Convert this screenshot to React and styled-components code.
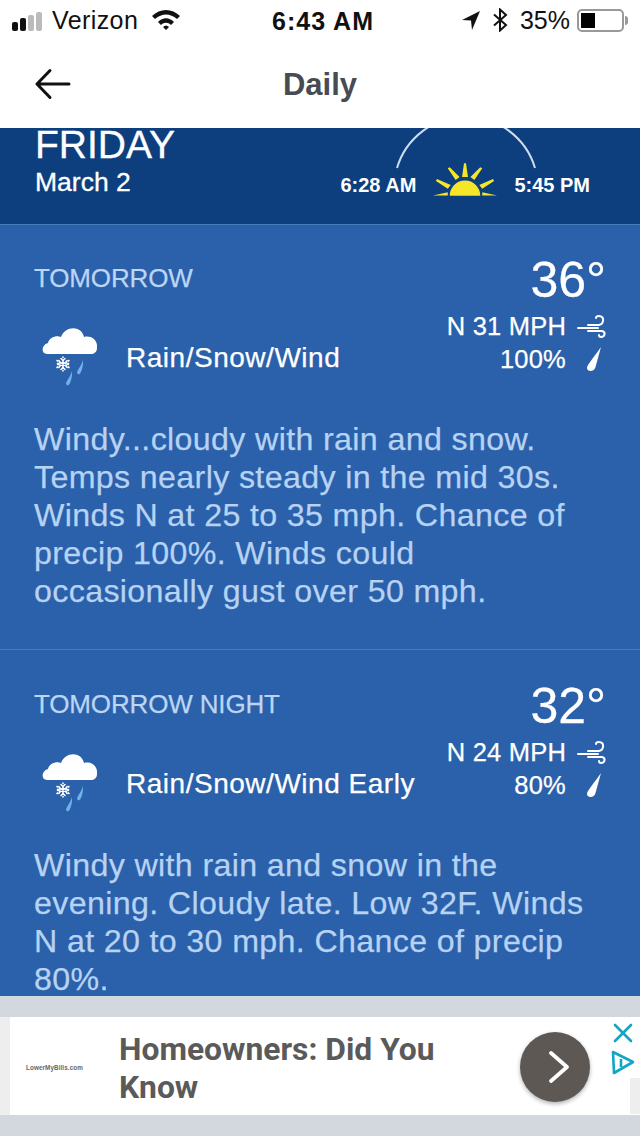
import React from "react";
import styled, { createGlobalStyle } from "styled-components";

const Global = createGlobalStyle`
  html, body { margin: 0; padding: 0; background: #d3d8df; }
  body { font-family: "Liberation Sans", Arial, sans-serif; }
`;
const Page = styled.div`
  width: 640px; height: 1136px; overflow: hidden; display: flex; flex-direction: column; background: #d3d8df;
`;
const StatusBar = styled.div`
  height: 40px; flex: none; background: #fff; display: flex; align-items: center; justify-content: space-between;
  padding: 0 16px 0 12px; color: #111; font-size: 25px; position: relative;
`;
const StatusSide = styled.div`display: flex; align-items: center; gap: ${p => p.$gap || 8}px;`;
const Carrier = styled.span`letter-spacing: .4px; margin-left: 4px;`;
const WifiIcon = styled.svg`margin-left: 7px;`;
const LocationIcon = styled.svg`margin-right: 1px;`;
const Percent = styled.span`margin: 0 -3px 0 2px;`;
const Clock = styled.div`
  position: absolute; left: 0; right: 0; top: 7px; text-align: center; font-weight: 700; font-size: 25px; line-height: 28px;
  letter-spacing: 1px; padding-left: 6px;
`;
const Bars = styled.div`display: flex; align-items: flex-end; gap: 2px; height: 20px; margin-top: 1px;`;
const Bar = styled.span`
  width: 6px; height: ${p => p.$h}px; border-radius: 2px; background: ${p => p.$on ? "#111" : "#bbb"};
`;
const Battery = styled.div`
  width: 47px; height: 23px; box-sizing: border-box; border: 2px solid #999; border-radius: 5px; padding: 2px;
  display: flex; position: relative;
  &::after { content: ""; position: absolute; right: -6px; top: 5px; width: 3px; height: 9px; background: #999; border-radius: 0 3px 3px 0; }
`;
const BatteryFill = styled.span`width: 14px; background: #000;`;
const NavBar = styled.div`
  height: 88px; flex: none; background: #fff; display: flex; align-items: center; justify-content: center; position: relative;
`;
const Back = styled.svg`position: absolute; left: 34px; top: 28px;`;
const NavTitle = styled.div`font-size: 31px; font-weight: 700; color: #464c53; padding-top: 2px;`;
const Header = styled.div`
  height: 96px; flex: none; box-sizing: border-box; background: #0d3f7f; overflow: hidden; display: flex; justify-content: space-between;
  padding: 0 50px 0 35px; color: #fff;
`;
const DayBlock = styled.div`display: flex; flex-direction: column; padding-top: 2px; -webkit-text-stroke: .3px #fff;`;
const DayName = styled.div`font-size: 39px; line-height: 30px; height: 30px;`;
const DayDate = styled.div`font-size: 26.5px; line-height: 30px; margin-top: 7px;`;
const SunRow = styled.div`
  position: relative; display: flex; align-items: center; gap: 17px; font-weight: 700; font-size: 20px; height: 42px; margin-top: 36px;
`;
const Arc = styled.svg`position: absolute; left: 55px; top: -47px;`;
const SunIcon = styled.svg`margin-bottom: 13px;`;
const Body = styled.div`flex: 1; min-height: 0; overflow: hidden; background: #2a61aa; -webkit-text-stroke: .25px;`;
const Section = styled.section`
  height: ${p => p.$h}px; box-sizing: border-box; border-top: 1px solid #4a7cbc; padding: ${p => p.$top}px 34px 0 34px; overflow: hidden;
`;
const TopRow = styled.div`display: flex; justify-content: space-between; align-items: flex-start;`;
const Left = styled.div`display: flex; flex-direction: column;`;
const Period = styled.div`font-size: 26px; line-height: 30px; color: #bcd5f4; margin-top: 11px; letter-spacing: -.15px;`;
const Cond = styled.div`display: flex; align-items: center; gap: 29px; margin-top: 27px; margin-left: 7px;`;
const CondText = styled.div`font-size: 28px; color: #fff; line-height: 30px; letter-spacing: .52px; padding-top: 6px;`;
const Right = styled.div`display: flex; flex-direction: column; align-items: flex-end;`;
const Temp = styled.div`font-size: 50px; line-height: 56px; color: #fff;`;
const Stat = styled.div`
  display: flex; align-items: center; gap: 10px; font-size: 25.5px; line-height: 33px; letter-spacing: .2px; color: #fff; margin-top: ${p => p.$top || 0}px;
`;
const IconSlot = styled.div`width: 30px; height: 26px; display: flex; justify-content: flex-end; padding-right: ${p => p.$pad || 0}px; box-sizing: border-box;`;
const Desc = styled.p`
  margin: 30px 0 0; max-width: 560px; font-size: 32.2px; line-height: 38px; color: #b7d2f3; letter-spacing: .35px;
`;
const AdArea = styled.div`height: 140px; flex: none; padding-top: 21px; box-sizing: border-box;`;
const Ad = styled.div`
  height: 98px; background: #fff; position: relative; display: flex; align-items: center; padding-left: 16px;
  border-left: 10px solid #eee; box-sizing: border-box;
`;
const AdBrand = styled.div`font-size: 6.3px; font-weight: 700; color: #666; width: 93px; margin-top: 2px; letter-spacing: .1px;`;
const AdTitle = styled.div`
  font-family: Roboto, sans-serif; font-weight: 700; font-size: 31.8px; line-height: 38px; color: #5a5a5a; width: 380px; margin-top: 3px;
`;
const AdButton = styled.div`
  position: absolute; left: 510px; top: 15px; width: 70px; height: 70px; border-radius: 50%; background: #5d5854;
  box-shadow: 0 2px 4px rgba(0,0,0,.3); display: flex; align-items: center; justify-content: center;
`;
const Chevron = styled.svg`margin-left: 4px;`;
const AdClose = styled.svg`position: absolute; left: 603px; top: 6px;`;
const AdInfo = styled.svg`position: absolute; left: 601px; top: 33px;`;
const AdEdge = styled.div`position: absolute; right: 0; bottom: 1px; width: 10px; height: 36px; background: #eee;`;

const Cloud = () => (
  <svg width="56" height="70" viewBox="0 0 56 70">
    <path d="M6 34 C0 34 0 25 7 23 C8 18 15 15 20 17 C24 6 40 5 43 17 C50 15 57 20 56 28 C56 32 53 34 50 34 Z" fill="#fff" />
    <g stroke="#fff" strokeWidth="1.5" strokeLinecap="round">
      <path d="M22 37v14M16 40.5l12 7M28 40.5l-12 7" />
      <path d="M20 38.5l2 2 2-2M20 49.5l2-2 2 2M16.5 43.5l2.5-.5-1-2.5M27.5 43.5l-2.5-.5 1-2.5M16.5 44.5l2.5.5-1 2.5M27.5 44.5l-2.5.5 1 2.5" />
    </g>
    <path d="M42 40 C41 44 38 48 36.5 51 C35 54 38 55.5 39.5 53 C41 50 42.5 45 42 40Z M31 51 C30 55 27 59 25.5 62 C24 65 27 66.5 28.5 64 C30 61 31.5 56 31 51Z" fill="#6db3e8" />
  </svg>
);
const Wind = () => (
  <svg width="30" height="26" viewBox="0 0 30 26" fill="none" stroke="#fff" strokeWidth="2" strokeLinecap="round">
    <path d="M12 11H23C28 10 29 2 23 2C21 2 20 3 20 4" />
    <path d="M2 14H22" />
    <path d="M12 17H26C30 18 29 23 25 23C24 23 23 22 23 21" />
  </svg>
);
const Drop = () => (
  <svg width="16" height="26" viewBox="0 0 16 26">
    <path d="M15 0 L9.5 20 C8.5 25 1 25 1 21 C1 18 6 13 15 0Z" fill="#fff" />
  </svg>
);
const Forecast = ({ h, top, period, cond, temp, wind, pop, text }) => (
  <Section $h={h} $top={top}>
    <TopRow>
      <Left>
        <Period>{period}</Period>
        <Cond><Cloud /><CondText>{cond}</CondText></Cond>
      </Left>
      <Right>
        <Temp>{temp}</Temp>
        <Stat $top={2}>{wind}<IconSlot><Wind /></IconSlot></Stat>
        <Stat>{pop}<IconSlot $pad={4}><Drop /></IconSlot></Stat>
      </Right>
    </TopRow>
    <Desc>{text}</Desc>
  </Section>
);

export default function App() {
  return (
    <Page>
      <Global />
      <StatusBar>
        <StatusSide $gap={6}>
          <Bars>
            <Bar $h={9} $on /><Bar $h={13} $on /><Bar $h={16} /><Bar $h={19} />
          </Bars>
          <Carrier>Verizon</Carrier>
          <WifiIcon width="30" height="22" viewBox="0 0 30 22">
            <path d="M1 7 C9 -1 21 -1 29 7 L26 10 C19 4 11 4 4 10Z M7 13 C12 8 18 8 23 13 L20 16 C17 13 13 13 10 16Z M12 18 C14 16 16 16 18 18 L15 21Z" fill="#111" />
          </WifiIcon>
        </StatusSide>
        <Clock>6:43 AM</Clock>
        <StatusSide $gap={10}>
          <LocationIcon width="20" height="20" viewBox="0 0 20 20"><path d="M19 1 L1 10 L10 10.5 L11 20Z" fill="#111" /></LocationIcon>
          <svg width="16" height="24" viewBox="0 0 16 24" fill="none" stroke="#111" strokeWidth="2"><path d="M2 6.5 L14 17 L8 22.5 V1.5 L14 7 L2 17.5" /></svg>
          <Percent>35%</Percent>
          <Battery><BatteryFill /></Battery>
        </StatusSide>
      </StatusBar>
      <NavBar>
        <Back width="38" height="32" viewBox="0 0 38 32" fill="none" stroke="#111" strokeWidth="3" strokeLinecap="round" strokeLinejoin="round">
          <path d="M35 16H3M16 2.5L3 16L16 29.5" />
        </Back>
        <NavTitle>Daily</NavTitle>
      </NavBar>
      <Header>
        <DayBlock>
          <DayName>FRIDAY</DayName>
          <DayDate>March 2</DayDate>
        </DayBlock>
        <SunRow>
          <Arc width="142" height="52" viewBox="0 0 142 52" fill="none" stroke="#cfdcee" strokeWidth="2">
            <path d="M2 51 A72 72 0 0 1 140 51" />
          </Arc>
          <span>6:28 AM</span>
          <SunIcon width="64" height="34" viewBox="0 0 65 34" fill="#f6e62a">
            <path d="M17 34 A15.5 15.5 0 0 1 48 34Z" />
            <path d="M31.5 1 H33.5 L35.5 15 H29.5Z" />
            <path d="M15 6 L17 5 L27 15 L23 18Z M50 6 L48 5 L38 15 L42 18Z" />
            <path d="M3 19 L4 17 L18 23 L15 27Z M62 19 L61 17 L47 23 L50 27Z" />
            <path d="M0 33.8 L15 30.5 L15 33.8Z M65 33.8 L50 30.5 L50 33.8Z" />
          </SunIcon>
          <span>5:45 PM</span>
        </SunRow>
      </Header>
      <Body>
        <Forecast
          h={425}
          top={27}
          period="TOMORROW"
          cond="Rain/Snow/Wind"
          temp="36°"
          wind="N 31 MPH"
          pop="100%"
          text="Windy...cloudy with rain and snow. Temps nearly steady in the mid 30s. Winds N at 25 to 35 mph. Chance of precip 100%. Winds could occasionally gust over 50 mph."
        />
        <Forecast
          h={347}
          top={28}
          period="TOMORROW NIGHT"
          cond="Rain/Snow/Wind Early"
          temp="32°"
          wind="N 24 MPH"
          pop="80%"
          text="Windy with rain and snow in the evening. Cloudy late. Low 32F. Winds N at 20 to 30 mph. Chance of precip 80%."
        />
      </Body>
      <AdArea>
        <Ad>
          <AdBrand>LowerMyBills.com</AdBrand>
          <AdTitle>Homeowners: Did You Know</AdTitle>
          <AdButton>
            <Chevron width="24" height="36" viewBox="0 0 24 36" fill="none" stroke="#fff" strokeWidth="3.7" strokeLinecap="round" strokeLinejoin="round">
              <path d="M6 4L22 18L6 32" />
            </Chevron>
          </AdButton>
          <AdClose width="20" height="20" viewBox="0 0 20 20" stroke="#12a5c6" strokeWidth="2.6" strokeLinecap="round"><path d="M2 2L18 18M18 2L2 18" /></AdClose>
          <AdInfo width="24" height="26" viewBox="0 0 24 26" fill="none" stroke="#12a5c6" strokeWidth="2.6" strokeLinejoin="round">
            <path d="M2 2L22 12L3 23Z" />
            <path d="M10 9v8M10 5.5v1.5" />
          </AdInfo>
          <AdEdge />
        </Ad>
      </AdArea>
    </Page>
  );
}
